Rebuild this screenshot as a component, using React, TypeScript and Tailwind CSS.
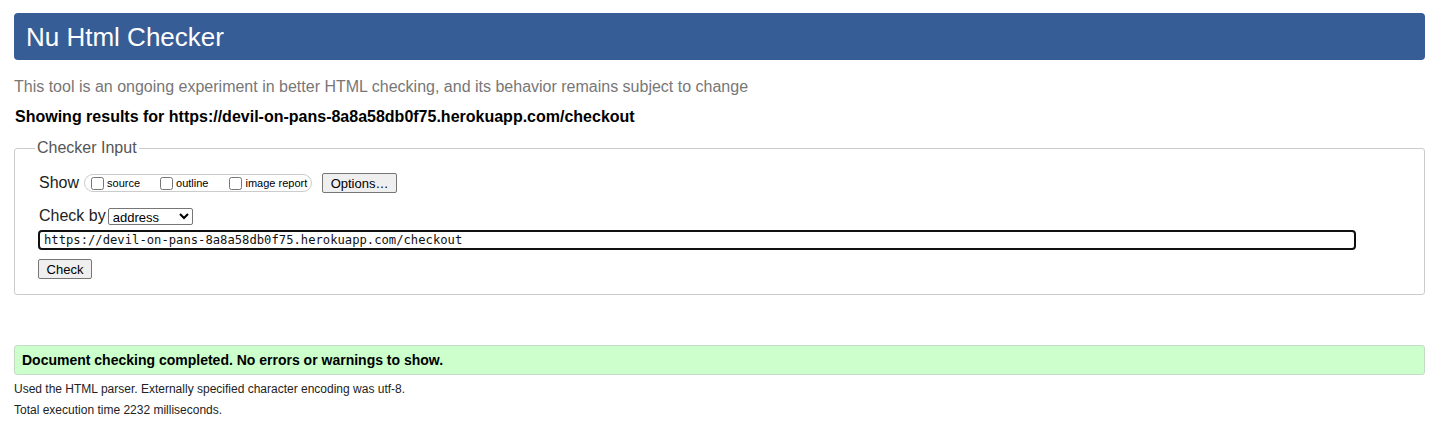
import { useState } from "react";

export default function App() {
  const [url, setUrl] = useState(
    "https://devil-on-pans-8a8a58db0f75.herokuapp.com/checkout"
  );

  return (
    <div
      className="min-h-screen bg-white pl-[14px] pr-[20px] pt-[13px] text-black"
      style={{ fontFamily: '"Liberation Sans", Arial, sans-serif' }}
    >
      <div className="flex h-[47px] items-center rounded-[4px] bg-[#375d96] px-[12px]">
        <h1 className="text-[26px] leading-none text-white">Nu Html Checker</h1>
      </div>

      <p className="mt-[18px] text-[16px] leading-[18px] text-[#777777]">
        This tool is an ongoing experiment in better HTML checking, and its
        behavior remains subject to change
      </p>

      <p className="mt-[12px] pl-px text-[16px] font-bold leading-[18px]">
        Showing results for {url}
      </p>

      <fieldset className="mt-[13px] rounded-[3px] border border-[#cccccc] px-[24px] pt-[16px] pb-[15px]">
        <legend className="-ml-[4px] px-[2px] text-[16px] leading-[18px] text-[#555555]">
          Checker Input
        </legend>

        <div className="flex h-[20px] items-center">
          <span className="text-[16px] leading-none text-[#222222]">Show</span>
          <div className="ml-[5px] flex h-[18px] w-[228px] items-center rounded-[9px] border border-[#cccccc] pl-[6px] text-[11px]">
            <label className="flex items-center">
              <input type="checkbox" className="m-0 h-[13px] w-[13px]" />
              <span className="ml-[3px]">source</span>
            </label>
            <label className="ml-[20px] flex items-center">
              <input type="checkbox" className="m-0 h-[13px] w-[13px]" />
              <span className="ml-[3px]">outline</span>
            </label>
            <label className="ml-[21px] flex items-center">
              <input type="checkbox" className="m-0 h-[13px] w-[13px]" />
              <span className="ml-[3px]">image report</span>
            </label>
          </div>
          <button className="ml-[10px] h-[20px] w-[75px] rounded-[2px] border border-[#767676] bg-[#efefef] text-[13px] leading-none">
            Options…
          </button>
        </div>

        <div className="mt-[14px] flex h-[18px] items-center">
          <span className="text-[16px] leading-none text-[#222222]">Check by</span>
          <select className="ml-[2px] h-[17px] w-[85px] rounded-[2px] border border-[#767676] bg-white text-[13px] leading-none">
            <option>address</option>
            <option>file upload</option>
            <option>text input</option>
          </select>
        </div>

        <input
          value={url}
          onChange={(e) => setUrl(e.target.value)}
          className="mt-[5px] block h-[20px] w-[1318px] -ml-[1px] rounded-[4px] border-2 border-[#101010] px-[4px] text-[12.2px] leading-none text-[#111111] outline-none"
          style={{ fontFamily: '"DejaVu Sans Mono", "Liberation Mono", monospace' }}
        />

        <button className="mt-[9px] -ml-[1px] block h-[20px] w-[54px] rounded-[2px] border border-[#767676] bg-[#efefef] text-[13px] leading-none">
          Check
        </button>
      </fieldset>

      <div className="mt-[50px] flex h-[30px] items-center rounded-[3px] border border-[#c4dcc4] bg-[#ccffcc] px-[7px]">
        <p className="text-[14px] font-bold leading-none">
          Document checking completed. No errors or warnings to show.
        </p>
      </div>

      <p className="mt-[7px] text-[12px] leading-[14px] text-[#222222]">
        Used the HTML parser. Externally specified character encoding was utf-8.
      </p>
      <p className="mt-[7px] text-[12px] leading-[14px] text-[#222222]">
        Total execution time 2232 milliseconds.
      </p>
    </div>
  );
}
